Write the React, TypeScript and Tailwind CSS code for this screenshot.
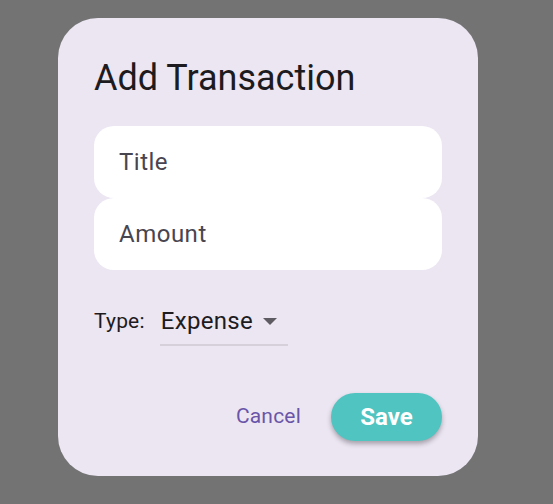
export default function App() {
  return (
    <main
      className="w-[553px] h-[504px] bg-[#737373] pt-[18px] pl-[58px] overflow-hidden"
      style={{ fontFamily: "Roboto, 'Noto Sans', sans-serif" }}
    >
      <div className="w-[420px] h-[458px] rounded-[40px] bg-[#ECE6F3] px-[36px] pt-[36px] flex flex-col">
        <h1 className="text-[36px] leading-[48px] text-[#1D1B20] font-normal">Add Transaction</h1>

        <div className="mt-[24px] flex flex-col">
          <div className="h-[72px] rounded-[20px] bg-white flex items-center pl-[25px] text-[24px] tracking-[0.5px] text-[#49454F]">
            Title
          </div>
          <div className="h-[72px] rounded-[20px] bg-white flex items-center pl-[25px] text-[24px] tracking-[0.5px] text-[#49454F]">
            Amount
          </div>
        </div>

        <div className="mt-[28px] flex items-center gap-[15px]">
          <span className="text-[21px] text-[#1D1B20] tracking-[0.2px]">Type:</span>
          <div className="w-[128px] h-[48px] border-b-2 border-[#D5D0DA] flex items-center justify-between pl-px pr-[11px]">
            <span className="text-[24px] text-[#1D1B20] tracking-[0.3px]">Expense</span>
            <svg width="14" height="7" viewBox="0 0 14 7">
              <path d="M0 0 L14 0 L7 7 Z" fill="#5F5B63" />
            </svg>
          </div>
        </div>

        <div className="mt-[47px] flex items-center justify-end gap-[30px]">
          <button className="text-[21px] text-[#6A55A8] tracking-[0.2px] font-normal">Cancel</button>
          <button className="w-[111px] h-[48px] rounded-full bg-[#50C4C0] text-white text-[24px] font-bold shadow-[0_3px_5px_rgba(0,0,0,0.3)]">
            Save
          </button>
        </div>
      </div>
    </main>
  );
}
